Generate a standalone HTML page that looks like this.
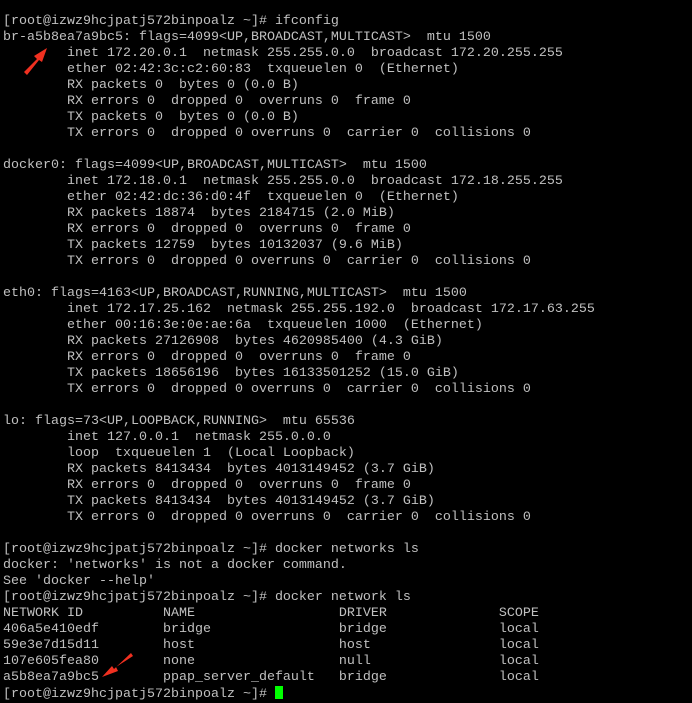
<!DOCTYPE html>
<html><head><meta charset="utf-8"><style>
html,body{margin:0;padding:0;background:#000;width:692px;height:691px;overflow:hidden}
pre{position:absolute;left:3px;top:14px;margin:0;font-family:"Liberation Mono","DejaVu Sans Mono",monospace;font-size:13.33px;line-height:16px;color:#c0c0c0;white-space:pre}
.cur{display:inline-block;width:8px;height:13px;background:#00ff00;vertical-align:-2px}
svg{position:absolute;left:0;top:0}
</style></head><body>
<pre>[root@izwz9hcjpatj572binpoalz ~]# ifconfig
br-a5b8ea7a9bc5: flags=4099&lt;UP,BROADCAST,MULTICAST&gt;  mtu 1500
        inet 172.20.0.1  netmask 255.255.0.0  broadcast 172.20.255.255
        ether 02:42:3c:c2:60:83  txqueuelen 0  (Ethernet)
        RX packets 0  bytes 0 (0.0 B)
        RX errors 0  dropped 0  overruns 0  frame 0
        TX packets 0  bytes 0 (0.0 B)
        TX errors 0  dropped 0 overruns 0  carrier 0  collisions 0

docker0: flags=4099&lt;UP,BROADCAST,MULTICAST&gt;  mtu 1500
        inet 172.18.0.1  netmask 255.255.0.0  broadcast 172.18.255.255
        ether 02:42:dc:36:d0:4f  txqueuelen 0  (Ethernet)
        RX packets 18874  bytes 2184715 (2.0 MiB)
        RX errors 0  dropped 0  overruns 0  frame 0
        TX packets 12759  bytes 10132037 (9.6 MiB)
        TX errors 0  dropped 0 overruns 0  carrier 0  collisions 0

eth0: flags=4163&lt;UP,BROADCAST,RUNNING,MULTICAST&gt;  mtu 1500
        inet 172.17.25.162  netmask 255.255.192.0  broadcast 172.17.63.255
        ether 00:16:3e:0e:ae:6a  txqueuelen 1000  (Ethernet)
        RX packets 27126908  bytes 4620985400 (4.3 GiB)
        RX errors 0  dropped 0  overruns 0  frame 0
        TX packets 18656196  bytes 16133501252 (15.0 GiB)
        TX errors 0  dropped 0 overruns 0  carrier 0  collisions 0

lo: flags=73&lt;UP,LOOPBACK,RUNNING&gt;  mtu 65536
        inet 127.0.0.1  netmask 255.0.0.0
        loop  txqueuelen 1  (Local Loopback)
        RX packets 8413434  bytes 4013149452 (3.7 GiB)
        RX errors 0  dropped 0  overruns 0  frame 0
        TX packets 8413434  bytes 4013149452 (3.7 GiB)
        TX errors 0  dropped 0 overruns 0  carrier 0  collisions 0

[root@izwz9hcjpatj572binpoalz ~]# docker networks ls
docker: 'networks' is not a docker command.
See 'docker --help'
[root@izwz9hcjpatj572binpoalz ~]# docker network ls
NETWORK ID          NAME                  DRIVER              SCOPE
406a5e410edf        bridge                bridge              local
59e3e7d15d11        host                  host                local
107e605fea80        none                  null                local
a5b8ea7a9bc5        ppap_server_default   bridge              local
[root@izwz9hcjpatj572binpoalz ~]# <span class="cur"></span></pre>
<svg width="692" height="691">
<polygon points="24,72 37,59 34,56 47,48 42,62 39,60 27,75" fill="#f03020"/>
<polygon points="133,656 116,667 118,671 102,677 112,666 114,669 131,653" fill="#f03020"/>
</svg>
</body></html>
